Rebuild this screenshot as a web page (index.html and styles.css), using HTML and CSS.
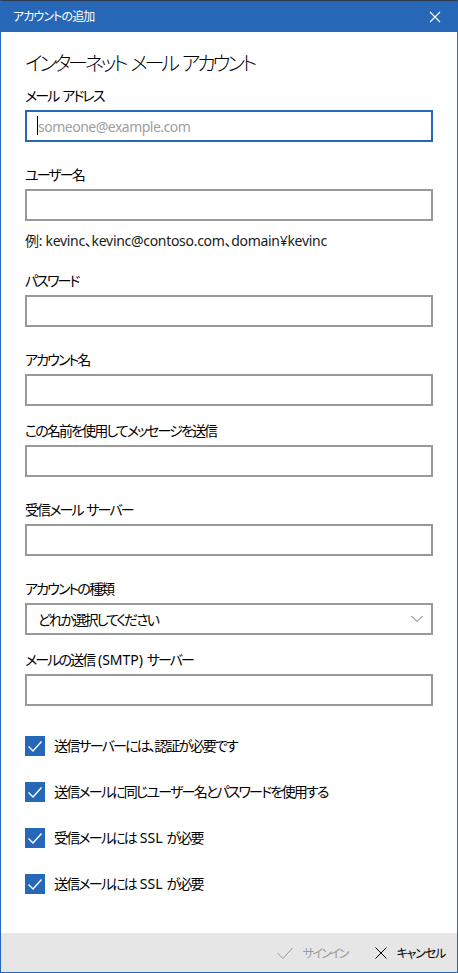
FILE: index.html
```html
<!DOCTYPE html>
<html lang="ja">
<head>
<meta charset="utf-8">
<title>アカウントの追加</title>
<link rel="stylesheet" href="styles.css">
</head>
<body>
<div class="window">
  <header class="titlebar">
    <span class="title">アカウントの追加</span>
    <svg class="close" width="12" height="12" viewBox="0 0 12 12"><path d="M1 1L11 11M11 1L1 11" stroke="#fff" stroke-width="1.1" fill="none"/></svg>
  </header>
  <main class="content">
    <h1 class="heading">インターネット メール アカウント</h1>

    <div class="field first">
      <div class="label">メール アドレス</div>
      <div class="box focused"><span class="caret"></span><span class="placeholder">someone@example.com</span></div>
    </div>

    <div class="field">
      <div class="label">ユーザー名</div>
      <div class="box"></div>
      <div class="hint">例: kevinc、kevinc@contoso.com、domain¥kevinc</div>
    </div>

    <div class="field after-hint">
      <div class="label">パスワード</div>
      <div class="box"></div>
    </div>

    <div class="field">
      <div class="label">アカウント名</div>
      <div class="box"></div>
    </div>

    <div class="field tight">
      <div class="label">この名前を使用してメッセージを送信</div>
      <div class="box"></div>
    </div>

    <div class="field">
      <div class="label">受信メール サーバー</div>
      <div class="box"></div>
    </div>

    <div class="field">
      <div class="label">アカウントの種類</div>
      <div class="box select"><span class="select-text">どれか選択してください</span>
        <svg class="chevron" width="12" height="8" viewBox="0 0 12 8"><path d="M0.5 1L6 6.5L11.5 1" stroke="#666" stroke-width="1" fill="none"/></svg>
      </div>
    </div>

    <div class="field tight">
      <div class="label">メールの送信 <span class="en">(SMTP)</span> サーバー</div>
      <div class="box"></div>
    </div>

    <div class="checks">
      <div class="check-row"><span class="checkbox"><svg width="20" height="20" viewBox="0 0 20 20"><path d="M3.5 10.5L8 15L16.5 5.5" stroke="#fff" stroke-width="1.4" fill="none"/></svg></span><span class="check-text">送信サーバーには、認証が必要です</span></div>
      <div class="check-row"><span class="checkbox"><svg width="20" height="20" viewBox="0 0 20 20"><path d="M3.5 10.5L8 15L16.5 5.5" stroke="#fff" stroke-width="1.4" fill="none"/></svg></span><span class="check-text">送信メールに同じユーザー名とパスワードを使用する</span></div>
      <div class="check-row"><span class="checkbox"><svg width="20" height="20" viewBox="0 0 20 20"><path d="M3.5 10.5L8 15L16.5 5.5" stroke="#fff" stroke-width="1.4" fill="none"/></svg></span><span class="check-text">受信メールには <span class="en">SSL</span> が必要</span></div>
      <div class="check-row"><span class="checkbox"><svg width="20" height="20" viewBox="0 0 20 20"><path d="M3.5 10.5L8 15L16.5 5.5" stroke="#fff" stroke-width="1.4" fill="none"/></svg></span><span class="check-text">送信メールには <span class="en">SSL</span> が必要</span></div>
    </div>
  </main>
  <footer class="bar">
    <div class="action disabled">
      <svg width="16" height="12" viewBox="0 0 16 12"><path d="M0.5 6L6 11.5L15.5 1" stroke="#999" stroke-width="1" fill="none"/></svg>
      <span>サインイン</span>
    </div>
    <div class="action">
      <svg width="12" height="12" viewBox="0 0 12 12"><path d="M0.5 0.5L11.5 11.5M11.5 0.5L0.5 11.5" stroke="#000" stroke-width="1" fill="none"/></svg>
      <span>キャンセル</span>
    </div>
  </footer>
</div>
</body>
</html>
```

FILE: styles.css
```css
* { box-sizing: border-box; }

html, body {
  margin: 0;
  padding: 0;
  background: #fff;
}

body {
  font-family: "Noto Sans", "Noto Sans CJK JP", sans-serif;
  font-feature-settings: "palt";
  color: #000;
}

.window {
  width: 458px;
  height: 973px;
  display: flex;
  flex-direction: column;
  border: 1px solid #2667b8;
  border-top-color: #2b3a4f;
  background: #fff;
}

.titlebar {
  height: 31px;
  flex: none;
  background: #2667b8;
  display: flex;
  align-items: center;
  justify-content: space-between;
  padding: 0 16px 0 12px;
}

.title {
  color: #fff;
  font-size: 12px;
  line-height: 16px;
  letter-spacing: -0.9px;
}

.close { display: block; }

.content {
  flex: 1;
  padding: 18px 24px 0 24px;
}

.heading {
  margin: 0;
  font-size: 20px;
  line-height: 28px;
  font-weight: 300;
  letter-spacing: -3.2px;
  word-spacing: 3px;
}

.field { margin-top: 23px; }
.field.first { margin-top: 8px; }
.field.tight { margin-top: 15px; }
.field.after-hint { margin-top: 20px; }

.label {
  font-size: 14px;
  line-height: 20px;
  margin-bottom: 4px;
  letter-spacing: -1.9px;
  word-spacing: 2px;
}

.en { letter-spacing: 0; }

.box {
  height: 32px;
  border: 2px solid #999;
  display: flex;
  align-items: center;
  padding: 0 10px;
  position: relative;
}

.box.focused { border-color: #2667b8; }

.caret {
  position: absolute;
  left: 10px;
  top: 4px;
  width: 1px;
  height: 19px;
  background: #000;
}

.placeholder {
  color: #a0a0a0;
  font-size: 14px;
  padding-left: 1px;
  letter-spacing: -0.5px;
}

.hint {
  margin-top: 10px;
  font-size: 14px;
  line-height: 20px;
  color: #1a1a1a;
  letter-spacing: -0.3px;
}

.select {
  justify-content: space-between;
  padding-right: 8px;
}

.select-text {
  font-size: 14px;
  padding-left: 1px;
  letter-spacing: -2px;
}

.chevron { display: block; }

.checks {
  margin-top: 30px;
  display: flex;
  flex-direction: column;
  gap: 26px;
}

.check-row {
  display: flex;
  align-items: center;
  gap: 9px;
  height: 20px;
}

.checkbox {
  width: 20px;
  height: 20px;
  background: #2667b8;
  display: block;
  flex: none;
}

.checkbox svg { display: block; }

.check-text {
  font-size: 14px;
  line-height: 20px;
  letter-spacing: -1.8px;
  word-spacing: 2px;
}

.bar {
  height: 39px;
  flex: none;
  background: #e6e6e6;
  display: flex;
  align-items: center;
  justify-content: flex-end;
  padding-right: 12px;
  gap: 27px;
}

.action {
  display: flex;
  align-items: center;
  gap: 10px;
  font-size: 12px;
  color: #000;
  letter-spacing: -1.2px;
}

.action svg { display: block; }

.action.disabled { color: #999; letter-spacing: -1.8px; }
```
